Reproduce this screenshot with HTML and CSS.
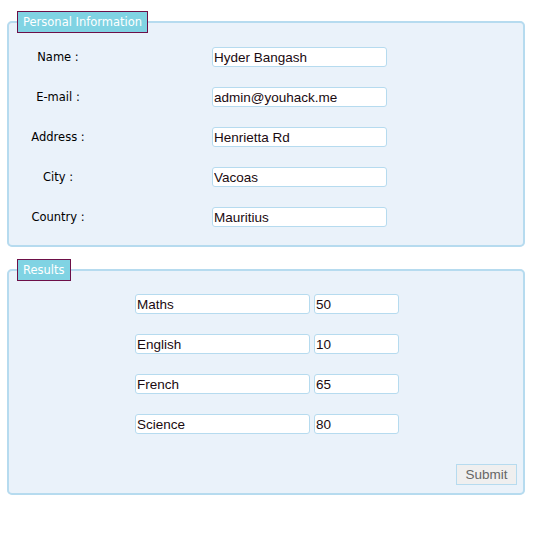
FILE: index.html
```html
<!DOCTYPE html>
<html>
<head>
<meta charset="utf-8">
<link rel="stylesheet" href="styles.css">
</head>
<body>
<form class="page">
  <fieldset class="box">
    <legend class="box-title">Personal Information</legend>
    <div class="info-grid">
      <label class="lbl">Name :</label>
      <input class="field" type="text" value="Hyder Bangash">
      <label class="lbl">E-mail :</label>
      <input class="field" type="text" value="admin@youhack.me">
      <label class="lbl">Address :</label>
      <input class="field" type="text" value="Henrietta Rd">
      <label class="lbl">City :</label>
      <input class="field" type="text" value="Vacoas">
      <label class="lbl">Country :</label>
      <input class="field" type="text" value="Mauritius">
    </div>
  </fieldset>
  <fieldset class="box results">
    <legend class="box-title">Results</legend>
    <div class="results-grid">
      <input class="field" type="text" value="Maths">
      <input class="field" type="text" value="50">
      <input class="field" type="text" value="English">
      <input class="field" type="text" value="10">
      <input class="field" type="text" value="French">
      <input class="field" type="text" value="65">
      <input class="field" type="text" value="Science">
      <input class="field" type="text" value="80">
    </div>
    <div class="actions">
      <button class="submit" type="button">Submit</button>
    </div>
  </fieldset>
</form>
</body>
</html>
```

FILE: styles.css
```css
html, body {
  margin: 0;
  padding: 0;
  background: #ffffff;
}

.page {
  display: flex;
  flex-direction: column;
  gap: 12px;
  padding: 11px 0 0 7px;
  width: 518px;
}

.box {
  margin: 0;
  padding: 14px 0 18px 8px;
  border: 2px solid #b6dbef;
  border-radius: 5px;
  background: #eaf2fa;
  min-width: 0;
}

.box-title {
  margin: 0;
  padding: 3px 5px 3px 5px;
  border: 1px solid #6d1048;
  background: #80d3e3;
  color: #ffffff;
  font-family: "DejaVu Sans", Verdana, sans-serif;
  font-size: 11.5px;
  line-height: 14px;
}

.info-grid {
  display: grid;
  grid-template-columns: 98px 175px;
  column-gap: 105px;
  row-gap: 20px;
  align-items: center;
  margin-left: -8px;
}

.lbl {
  text-align: center;
  font-family: "DejaVu Sans", Verdana, sans-serif;
  font-size: 11.5px;
  color: #000000;
}

.field {
  box-sizing: border-box;
  height: 20px;
  margin: 0;
  padding: 0 1px;
  border: 1px solid #b6dbef;
  border-radius: 3px;
  background: #ffffff;
  color: #1a0a10;
  font-family: "Liberation Sans", Arial, sans-serif;
  font-size: 13.5px;
  outline: none;
}

.results {
  padding-top: 13px;
  padding-bottom: 8px;
}

.results-grid {
  display: grid;
  grid-template-columns: 175px 85px;
  column-gap: 4px;
  row-gap: 20px;
  margin-left: 118px;
}

.actions {
  display: flex;
  justify-content: flex-end;
  margin-top: 30px;
  padding-right: 6px;
}

.submit {
  box-sizing: border-box;
  width: 61px;
  height: 21px;
  margin: 0;
  padding: 0;
  border: 1px solid #b6dbef;
  background: #efefef;
  color: #666666;
  font-family: "Liberation Sans", Arial, sans-serif;
  font-size: 13.5px;
}
```
